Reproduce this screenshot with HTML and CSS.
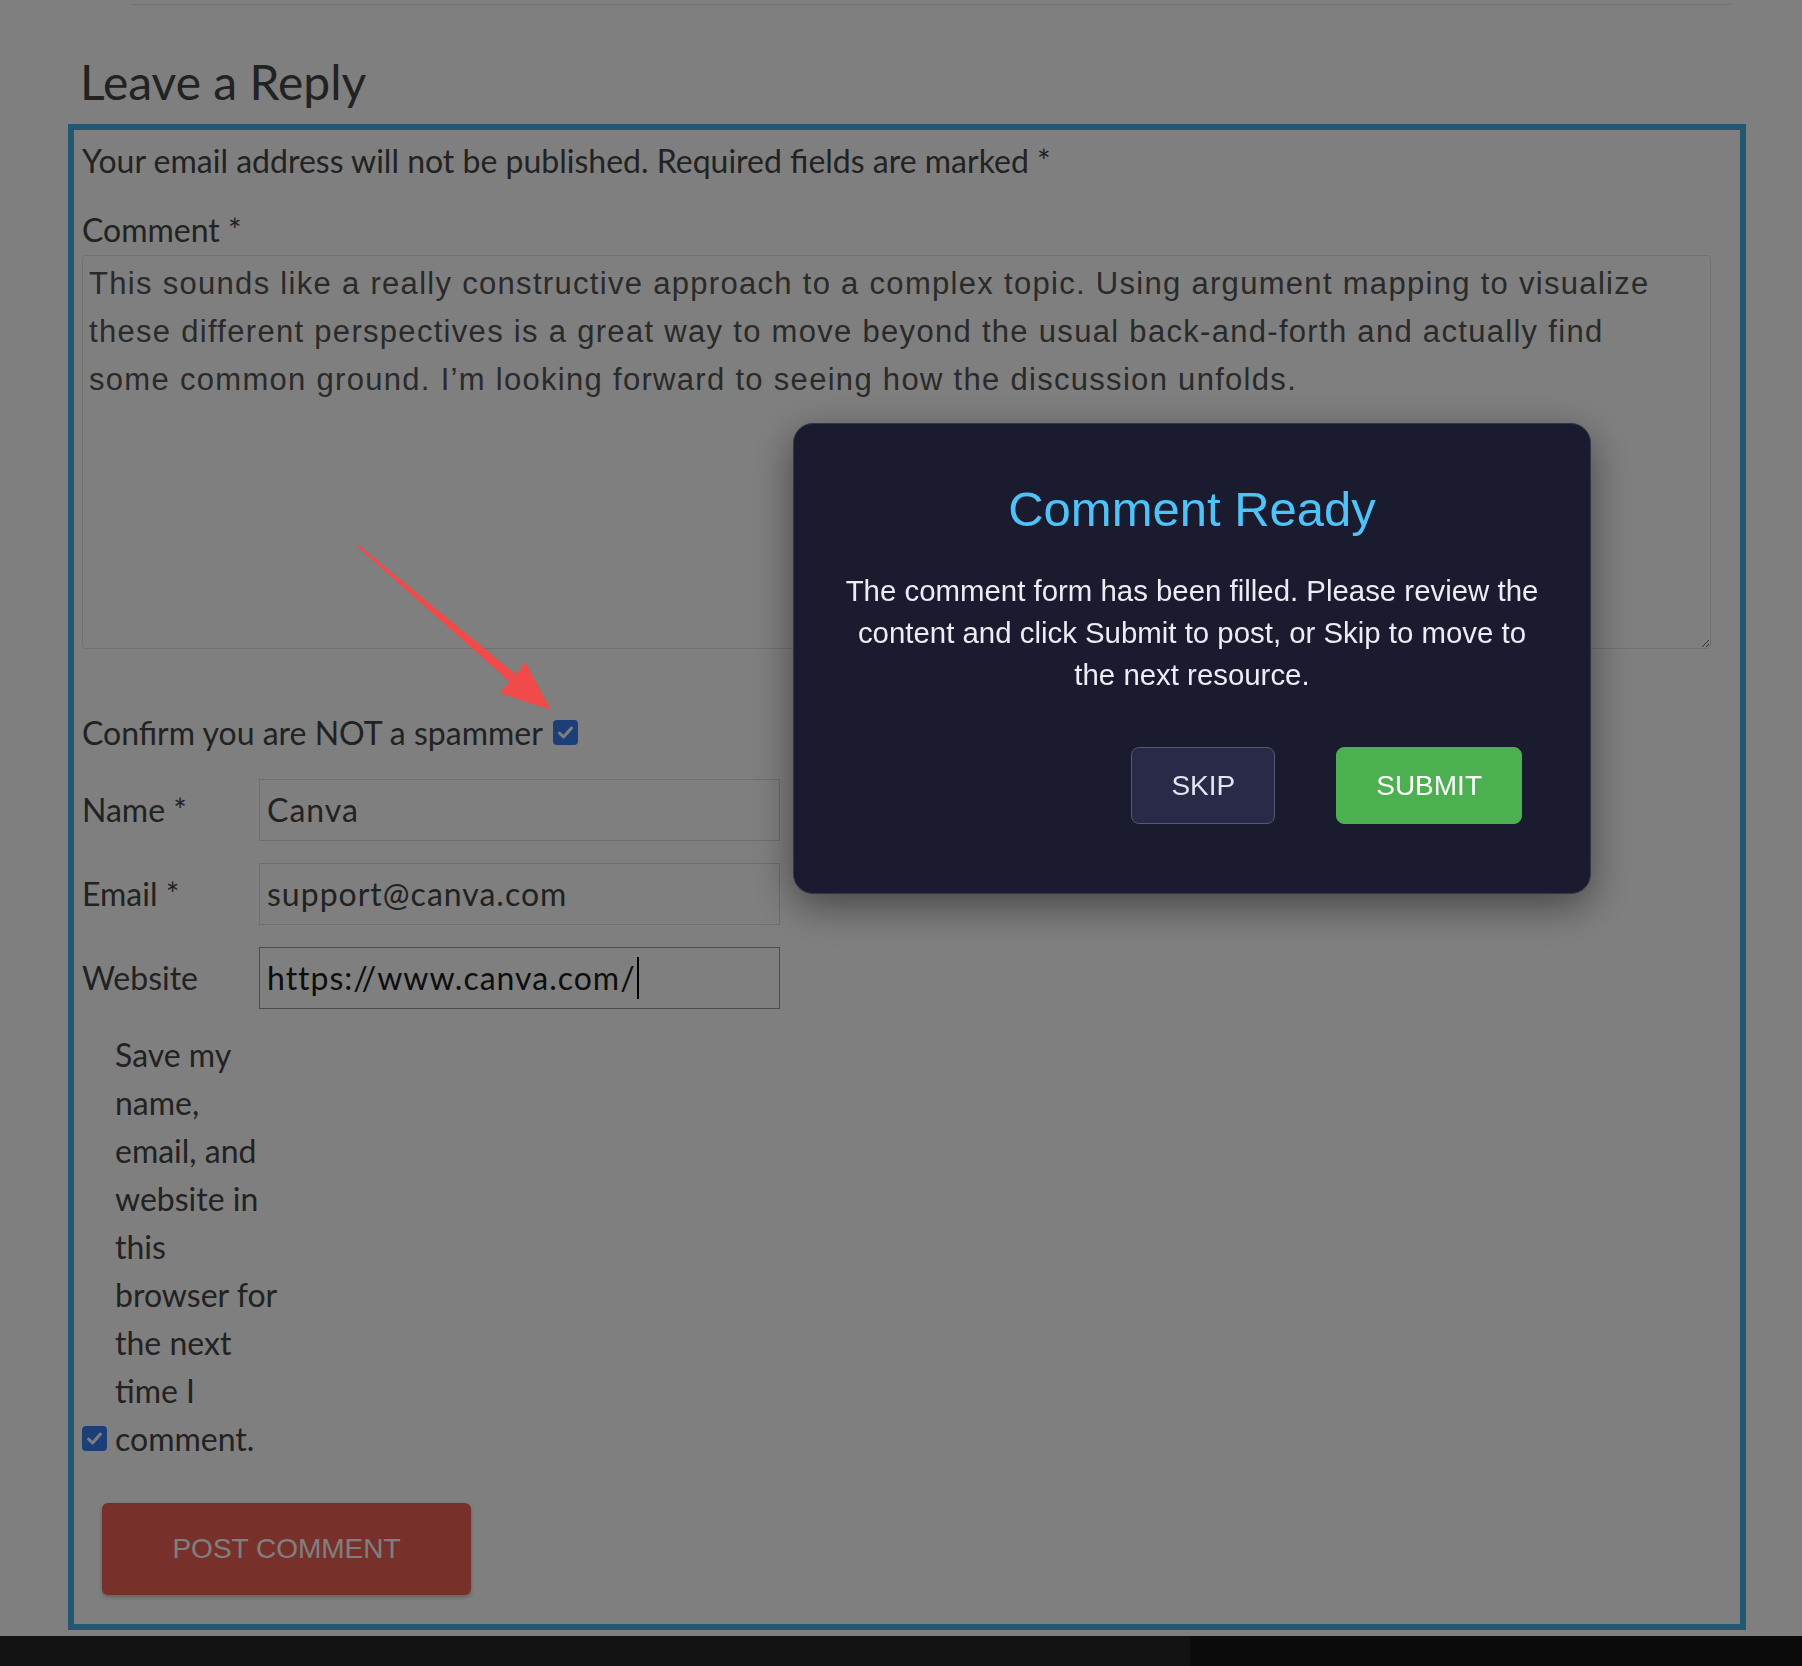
FILE: index.html
```html
<!DOCTYPE html>
<html lang="en">
<head>
  <meta charset="UTF-8">
  <title>Leave a Reply</title>
  <link rel="stylesheet" href="styles.css">
</head>
<body>

<div class="page">
  <div class="divider"></div>

  <div class="comment-respond">
    <h2 class="reply-title">Leave a Reply</h2>

    <form class="comment-form" id="commentForm">
      <p class="comment-notes">Your email address will not be published. Required fields are marked *</p>

      <label class="comment-label" for="comment">Comment *</label>
      <textarea id="comment">This sounds like a really constructive approach to a complex topic. Using argument mapping to visualize these different perspectives is a great way to move beyond the usual back-and-forth and actually find some common ground. I’m looking forward to seeing how the discussion unfolds.</textarea>

      <p class="spam-check">Confirm you are NOT a spammer <span class="checkbox"><svg width="25" height="25" viewBox="0 0 25 25"><path d="M6.5 13 L10.5 17 L18.5 8" fill="none" stroke="#fff" stroke-width="3" stroke-linecap="round" stroke-linejoin="round"/></svg></span></p>

      <div class="field">
        <label for="author">Name *</label>
        <input type="text" id="author" value="Canva">
      </div>
      <div class="field">
        <label for="email">Email *</label>
        <input type="text" id="email" value="support@canva.com">
      </div>
      <div class="field">
        <label for="url">Website</label>
        <span class="input-wrap typing"><input type="text" id="url" class="active" value="https://www.canva.com/"></span>
      </div>

      <p class="cookies-consent"><span class="checkbox"><svg width="25" height="25" viewBox="0 0 25 25"><path d="M6.5 13 L10.5 17 L18.5 8" fill="none" stroke="#fff" stroke-width="3" stroke-linecap="round" stroke-linejoin="round"/></svg></span><label>Save my name, email, and website in this browser for the next time I comment.</label></p>

      <button type="submit" class="submit">POST COMMENT</button>
    </form>
  </div>

  <footer class="site-footer">
    <div class="footer-left"></div>
    <div class="footer-right"></div>
  </footer>
</div>

<!-- Review modal -->
<div class="modal-overlay" id="reviewModal">
  <div class="modal">
    <h3>Comment Ready</h3>
    <p>The comment form has been filled. Please review the content and click Submit to post, or Skip to move to the next resource.</p>
    <div class="modal-actions">
      <button class="btn-skip">SKIP</button>
      <button class="btn-submit">SUBMIT</button>
    </div>
  </div>
</div>

<!-- pointer to the spam checkbox -->
<svg class="arrow" width="230" height="200" viewBox="0 0 230 200">
  <polygon points="17.6,14.3 175.8,144.2 185.6,132.5 211,180 159.8,163.1 169.6,151.4 16.4,15.7" fill="#f04a4a"/>
</svg>

</body>
</html>
```

FILE: styles.css
```css
body {
  margin: 0;
  font-family: Lato, "Liberation Sans", sans-serif;
  font-size: 32px;
  line-height: 48px;
  color: #454545;
  background: #fff;
}

.page {
  padding-top: 4px;
}

.divider {
  height: 1px;
  margin: 0 71px 0 132px;
  background: #e4e4e4;
}

.comment-respond {
  width: 1678px;
  margin-left: 68px;
}

.reply-title {
  margin: 48px 0 13px 12px;
  font-size: 48px;
  font-weight: 400;
  line-height: 1.2;
}

.comment-form {
  border: 6px solid #46b0e6;
  padding: 7px 29px 29px 8px;
}

.comment-notes {
  margin: 0 0 21px;
}

.comment-label {
  display: block;
}

textarea {
  display: block;
  width: 100%;
  height: 394px;
  margin-top: 1px;
  padding: 4px 40px 4px 6px;
  box-sizing: border-box;
  border: 1px solid #e2e2e2;
  border-radius: 4px;
  font-family: "Liberation Sans", Arial, sans-serif;
  font-size: 31px;
  letter-spacing: 1.3px;
  line-height: 48px;
  color: #555;
  outline: none;
}

.checkbox {
  display: inline-block;
  width: 25px;
  height: 25px;
  border-radius: 4px;
  background: #3b7ff0;
  vertical-align: baseline;
}

.checkbox svg {
  display: block;
}

.spam-check {
  margin: 60px 0 0;
}

.spam-check .checkbox {
  margin-left: 3px;
}

.field {
  display: flex;
  align-items: center;
  margin-top: 22px;
}

.field label {
  width: 177px;
  flex-shrink: 0;
}

.field input {
  width: 521px;
  height: 62px;
  padding: 0 7px;
  box-sizing: border-box;
  border: 1px solid #dcdcdc;
  font-family: Lato, sans-serif;
  font-size: 32px;
  letter-spacing: 1px;
  color: #454545;
  background: #fff;
  outline: none;
}

.field input.active {
  border-color: #999;
  color: #1a1a1a;
}

.input-wrap {
  position: relative;
  display: block;
}

.input-wrap input {
  display: block;
}

/* text caret at the end of the focused field */
.typing::after {
  content: "";
  position: absolute;
  left: 378px;
  top: 10px;
  width: 2px;
  height: 42px;
  background: #000;
}

.cookies-consent {
  margin: 22px 0 0;
}

.cookies-consent .checkbox {
  margin-right: 8px;
}

.cookies-consent label {
  display: inline-block;
  width: 170px;
}

.submit {
  display: block;
  width: 369px;
  height: 92px;
  margin: 40px 0 0 20px;
  border: none;
  border-radius: 6px;
  background: #f06054;
  color: #fff;
  font-family: "Liberation Sans", Arial, sans-serif;
  font-size: 28px;
  box-shadow: 0 2px 4px rgba(0,0,0,0.25);
  cursor: pointer;
}

.site-footer {
  display: grid;
  grid-template-columns: 1190px 1fr;
  height: 60px;
  margin-top: 6px;
}

.footer-left { background: #262626; }
.footer-right { background: #161616; }

/* Modal styles */
.modal-overlay {
  position: fixed;
  top: 0; left: 0;
  width: 100vw; height: 100vh;
  background: rgba(0, 0, 0, 0.5);
  z-index: 10;
}

.modal {
  position: absolute;
  left: 793px;
  top: 423px;
  width: 798px;
  box-sizing: border-box;
  padding: 57px 39px 69px;
  background: #1a1b2e;
  border: 1px solid #34364c;
  border-radius: 20px;
  box-shadow: 0 12px 40px rgba(0,0,0,0.45);
  text-align: center;
  font-family: "Liberation Sans", Arial, sans-serif;
}

.modal h3 {
  margin: 0 0 33px;
  font-size: 49px;
  font-weight: 400;
  line-height: 56px;
  color: #4fc3f7;
}

.modal p {
  margin: 0 9px 51px;
  font-size: 29.4px;
  line-height: 42px;
  color: #ececf4;
}

.modal-actions {
  display: flex;
  justify-content: flex-end;
  gap: 61px;
  padding-right: 29px;
}

.modal-actions button {
  height: 77px;
  padding: 0 39px;
  border-radius: 8px;
  font-family: inherit;
  font-size: 28px;
  cursor: pointer;
}

.btn-skip {
  background: #282a48;
  border: 1px solid #56586e;
  color: #e4e4ee;
}

.btn-submit {
  background: #4caf50;
  border: 1px solid #4caf50;
  color: #fff;
}

.arrow {
  position: absolute;
  left: 340px;
  top: 530px;
  z-index: 20;
}
```
